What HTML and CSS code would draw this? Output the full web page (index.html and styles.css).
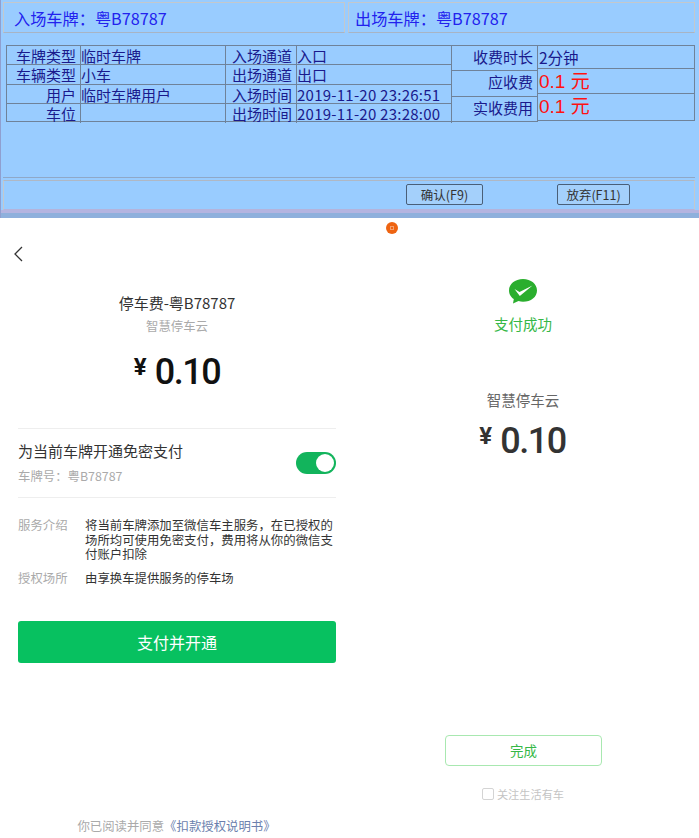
FILE: index.html
```html
<!DOCTYPE html>
<html lang="zh">
<head>
<meta charset="utf-8">
<title>停车收费</title>
<link rel="stylesheet" href="styles.css">
</head>
<body>
<div class="window">
  <div class="plates">
    <div class="plate plate-left">入场车牌：粤B78787</div>
    <div class="plate plate-right">出场车牌：粤B78787</div>
  </div>
  <div class="details">
    <div class="grid">
      <div class="c lab">车牌类型</div><div class="c val">临时车牌</div><div class="c lab">入场通道</div><div class="c val">入口</div>
      <div class="c lab">车辆类型</div><div class="c val">小车</div><div class="c lab">出场通道</div><div class="c val">出口</div>
      <div class="c lab">用户</div><div class="c val">临时车牌用户</div><div class="c lab">入场时间</div><div class="c val num">2019-11-20 23:26:51</div>
      <div class="c lab">车位</div><div class="c val"></div><div class="c lab">出场时间</div><div class="c val num">2019-11-20 23:28:00</div>
    </div>
    <div class="fee-labels">
      <div class="f lab">收费时长</div>
      <div class="f lab">应收费</div>
      <div class="f lab">实收费用</div>
    </div>
    <div class="fee-values">
      <div class="v v1">2分钟</div>
      <div class="v v2 red">0.1 元</div>
      <div class="v v3 red">0.1 元</div>
    </div>
  </div>
  <div class="actions">
    <div class="win-btn btn-ok">确认(F9)</div>
    <div class="win-btn btn-no">放弃(F11)</div>
  </div>
</div>
<div class="dot"><span></span></div>
<div class="phones">
  <section class="phone pay">
    <svg class="back" width="12" height="18" viewBox="0 0 12 18"><path d="M10 2 L3 9 L10 16" fill="none" stroke="#333" stroke-width="1.3"/></svg>
    <div class="title">停车费-粤B78787</div>
    <div class="merchant">智慧停车云</div>
    <div class="amount"><span class="yen">¥</span><span>0.10</span></div>
    <div class="toggle-row">
      <div>
        <div class="toggle-title">为当前车牌开通免密支付</div>
        <div class="toggle-sub">车牌号：粤B78787</div>
      </div>
      <div class="switch"><span></span></div>
    </div>
    <div class="info">
      <div class="info-k">服务介绍</div>
      <div class="info-v">将当前车牌添加至微信车主服务，在已授权的场所均可使用免密支付，费用将从你的微信支付账户扣除</div>
      <div class="info-k">授权场所</div>
      <div class="info-v">由享换车提供服务的停车场</div>
    </div>
    <div class="pay-btn">支付并开通</div>
    <div class="agree">你已阅读并同意<span class="link">《扣款授权说明书》</span></div>
  </section>
  <section class="phone done">
    <svg class="wx" width="30" height="27" viewBox="0 0 30 27"><path d="M15 1C7 1 1 6 1 12.400C1 16.500 3.500 19.600 5.800 21L5 25.500L10.500 22.900C12 23.400 13.500 23.700 15 23.700C23 23.700 29 18.800 29 12.400C29 6 23 1 15 1Z" fill="#2aae2e"/><path d="M6.500 11L11.500 14L24.500 7.500L11.800 18Z" fill="#fff"/></svg>
    <div class="success">支付成功</div>
    <div class="merchant2">智慧停车云</div>
    <div class="amount2"><span class="yen2">¥</span><span>0.10</span></div>
    <div class="done-btn">完成</div>
    <div class="follow"><span class="check"></span>关注生活有车</div>
  </section>
</div>
</body>
</html>
```
FILE: styles.css
```css
* { box-sizing: border-box; }
html, body { margin: 0; padding: 0; }
body {
  width: 699px;
  height: 838px;
  overflow: hidden;
  background: #fff;
  position: relative;
  font-family: "Noto Sans CJK SC", "Liberation Sans", sans-serif;
}
.window {
  height: 218px;
  background: #99ccff;
  padding: 2px 3px 0 2px;
  border-left: 1px solid #8f9fd0;
  box-shadow: inset 0 -5px 0 #8fb0dc, inset 0 -8px 0 #b4b4e0;
}
.plates { display: flex; gap: 3px; height: 31px; }
.plate {
  height: 31px;
  border: 1px solid #c4c8cc;
  border-bottom-color: #a8b4c4;
  color: #2222ee;
  font-size: 16.200px;
  line-height: 31px;
  white-space: nowrap;
}
.plate-left { width: 342px; padding-left: 10px; }
.plate-right { width: 347px; padding-left: 6px; }
.details {
  display: flex;
  margin: 12px 0 0 3px;
  height: 77px;
  color: #1a1a8c;
  font-size: 15px;
}
.grid {
  width: 446px;
  display: grid;
  grid-template-columns: 74px 145px 71px 155px;
  grid-template-rows: repeat(4, 19.250px);
  border: 1px solid #6f8299;
  border-right: 0;
}
.c {
  border-right: 1px solid #6f8299;
  border-bottom: 1px solid #6f8299;
  line-height: 19px;
  white-space: nowrap;
  overflow: hidden;
}
.grid .c:nth-last-child(-n+4) { border-bottom: 0; }
.lab { text-align: right; padding-right: 4px; }
.val { padding-left: 0; }
.num { letter-spacing: .25px; }
.fee-labels {
  width: 86px;
  display: flex;
  flex-direction: column;
  border-top: 1px solid #6f8299;
  border-bottom: 1px solid #6f8299;
  border-right: 1px solid #6f8299;
}
.f { flex: 1; line-height: 21px; border-bottom: 1px solid #6f8299; }
.f:last-child { border-bottom: 0; }
.fee-values { width: 157px; height: 76px; display: flex; flex-direction: column; border: 1px solid #6f8299; border-left: 0; }
.v { padding-left: 1px; border-bottom: 1px solid #6f8299; line-height: 22px; white-space: nowrap; }
.v1 { height: 23px; font-size: 15.500px; }
.v2 { height: 25px; }
.v3 { height: 26px; border-bottom: 0; }
.red { color: #ff1111; font-size: 19px; font-family: "Liberation Sans", "Noto Sans CJK SC", sans-serif; line-height: 26px; }
.actions {
  margin-top: 58px;
  height: 30px;
  width: 692px;
  padding-bottom: 2px;
  border: 1px solid #c4c8cc;
  border-bottom-color: #b4b4dc;
  border-top-color: #b0b8c4;
  display: flex;
  align-items: center;
  position: relative;
}
.details + .actions::before {
  content: "";
  position: absolute;
  left: -1px;
  right: -1px;
  top: -4px;
  height: 1px;
  background: #8fa8c8;
}
.win-btn {
  height: 21px;
  border: 1px solid #4a5f78;
  border-radius: 2px;
  background: #a4d0fb;
  color: #333;
  text-align: center;
  font-size: 12.500px;
  line-height: 20px;
}
.btn-ok { width: 77px; margin-left: 402px; }
.btn-no { width: 73px; margin-left: 74px; }
.dot {
  position: absolute;
  left: 386px;
  top: 222px;
  width: 12px;
  height: 12px;
  border-radius: 50%;
  background: #ee6412;
  display: flex;
  align-items: center;
  justify-content: center;
}
.dot span { width: 4px; height: 4px; border: 1px solid #f4a070; }
.phones { display: flex; height: 620px; }
.phone { width: 349px; position: relative; }
.pay { padding: 0 13px 0 18px; }
.done { width: 350px; text-align: center; }
.back { display: block; margin: 27px 0 0 -6px; }
.title { margin-top: 30px; text-align: center; font-size: 15px; line-height: 20px; color: #333; }
.merchant { margin-top: 4px; text-align: center; font-size: 12.400px; line-height: 18px; color: #aaa; }
.amount, .amount2 {
  display: flex;
  justify-content: center;
  gap: 8px;
  height: 44px;
  font-family: Roboto, "Liberation Sans", sans-serif;
  font-weight: 500;
  font-size: 36px;
  letter-spacing: -1.500px;
  line-height: 44px;
}
.amount { margin-top: 15px; color: #111; }
.yen, .yen2 { font-size: 24px; line-height: 34px; font-weight: 700; letter-spacing: 0; }
.toggle-row {
  margin-top: 34px;
  height: 70px;
  border-top: 1px solid #eee;
  border-bottom: 1px solid #eee;
  display: flex;
  justify-content: space-between;
  align-items: center;
}
.toggle-title { font-size: 15px; line-height: 20px; color: #333; margin-top: -1px; }
.toggle-sub { font-size: 12.400px; line-height: 18px; margin-top: 6px; color: #aaa; }
.switch {
  width: 40px;
  height: 22px;
  border-radius: 11px;
  background: #12b45c;
  position: relative;
}
.switch span {
  position: absolute;
  right: 2px;
  top: 2px;
  width: 18px;
  height: 18px;
  border-radius: 50%;
  background: #fff;
}
.info {
  margin-top: 20px;
  display: grid;
  grid-template-columns: 67px 1fr;
  row-gap: 9.500px;
  font-size: 12.400px;
  line-height: 14.500px;
}
.info-k { color: #aaa; }
.info-v { color: #333; }
.pay-btn {
  margin-top: 35.500px;
  height: 42px;
  border-radius: 3px;
  background: #07c160;
  color: #fff;
  text-align: center;
  font-size: 16px;
  line-height: 43px;
}
.agree {
  margin-top: 155px;
  margin-left: -16px;
  width: 349px;
  text-align: center;
  font-size: 12.400px;
  line-height: 16px;
  color: #aaa;
}
.link { color: #6b80ad; }
.wx { display: block; margin: 60px auto 0 159px; }
.success { margin-top: 9px; margin-left: -2px; font-size: 14.500px; line-height: 20px; color: #36b847; }
.merchant2 { margin-top: 56px; margin-left: -2px; font-size: 14.500px; line-height: 20px; color: #666; }
.amount2 { margin-top: 9px; margin-left: -3px; color: #333; }
.done-btn {
  margin: 272px 0 0 96px;
  width: 157px;
  height: 31px;
  border: 1px solid #a8e8b0;
  border-radius: 4px;
  color: #36b847;
  font-size: 13.500px;
  line-height: 29px;
}
.follow {
  margin-top: 20px;
  margin-left: -2px;
  display: flex;
  justify-content: center;
  align-items: center;
  gap: 3px;
  font-size: 11.200px;
  line-height: 16px;
  color: #c4c4c4;
}
.check { width: 12px; height: 12px; border: 1px solid #d4d4d4; border-radius: 2px; }
```
